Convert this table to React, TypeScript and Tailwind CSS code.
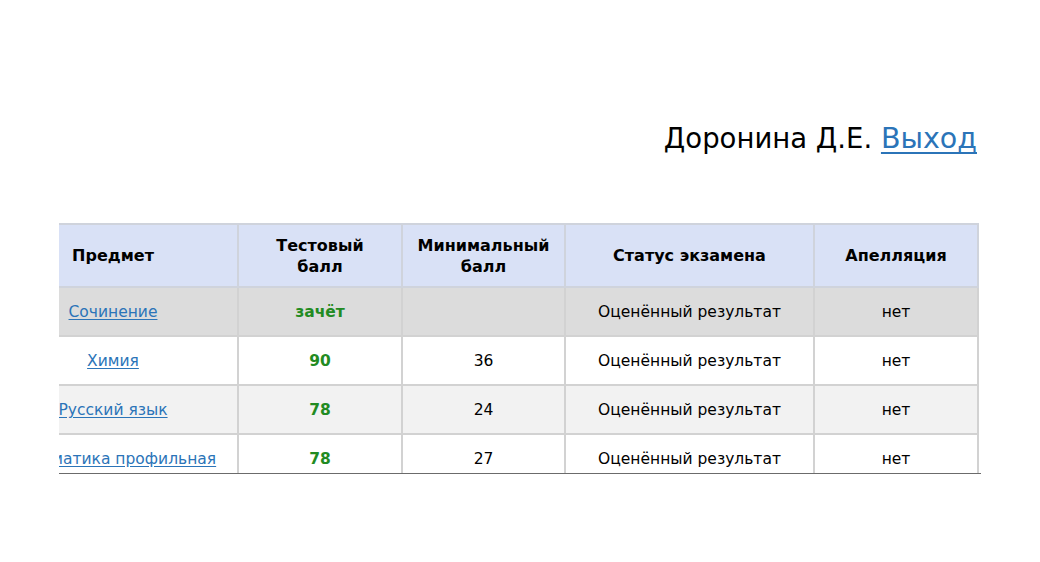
import React from "react";

type Row = {
  subject: string;
  score: string;
  min: string;
  status: string;
  appeal: string;
  bg: string;
};

const rows: Row[] = [
  { subject: "Сочинение", score: "зачёт", min: "", status: "Оценённый результат", appeal: "нет", bg: "bg-[#dcdcdc]" },
  { subject: "Химия", score: "90", min: "36", status: "Оценённый результат", appeal: "нет", bg: "bg-white" },
  { subject: "Русский язык", score: "78", min: "24", status: "Оценённый результат", appeal: "нет", bg: "bg-[#f2f2f2]" },
  { subject: "Математика профильная", score: "78", min: "27", status: "Оценённый результат", appeal: "нет", bg: "bg-white" },
];

const th = "border-2 border-[#cfd3dc] font-bold text-[16px] text-center align-middle px-2 leading-[21px]";
const td = "border-2 border-[#d2d2d2] text-center align-middle h-[49px] px-2 pt-[3px]";

const App = () => {
  return (
    <div
      className="w-full h-[562px] bg-white text-black overflow-hidden"
      style={{ fontFamily: '"DejaVu Sans", Verdana, sans-serif' }}
    >
      <div className="w-[922px] mx-auto">
        <div className="pt-[121px] pr-1 text-right text-[27.5px] leading-[34px]">
          Доронина Д.Е.{" "}
          <a href="#" className="text-[#2b74b8] underline underline-offset-4 decoration-2 text-[28.5px]">
            Выход
          </a>
        </div>

        <div className="mt-[67px] h-[251px] overflow-hidden border-b border-[#6b6b6b]">
          <table className="-ml-[72px] border-collapse text-[15.5px] table-fixed w-[990px]">
            <colgroup>
              <col className="w-[250px]" />
              <col className="w-[164px]" />
              <col className="w-[163px]" />
              <col className="w-[249px]" />
              <col className="w-[164px]" />
            </colgroup>
            <thead>
              <tr className="bg-[#d9e1f6] h-[63px]">
                <th className={th}>Предмет</th>
                <th className={th}>
                  Тестовый
                  <br />
                  балл
                </th>
                <th className={th}>
                  Минимальный
                  <br />
                  балл
                </th>
                <th className={th}>Статус экзамена</th>
                <th className={th}>Апелляция</th>
              </tr>
            </thead>
            <tbody>
              {rows.map((r) => (
                <tr key={r.subject} className={r.bg}>
                  <td className={td + " whitespace-nowrap"}>
                    <a href="#" className="text-[#2b74b8] underline underline-offset-2">
                      {r.subject}
                    </a>
                  </td>
                  <td className={td + " font-bold text-[#228b22]"}>{r.score}</td>
                  <td className={td}>{r.min}</td>
                  <td className={td}>{r.status}</td>
                  <td className={td}>{r.appeal}</td>
                </tr>
              ))}
            </tbody>
          </table>
        </div>
      </div>
    </div>
  );
};

export default App;
